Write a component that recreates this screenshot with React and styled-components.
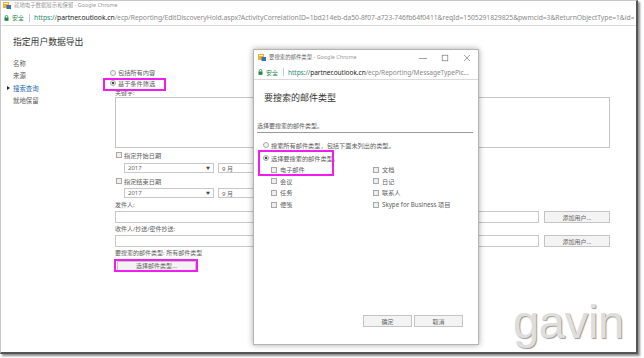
import React from 'react';
import styled, { createGlobalStyle } from 'styled-components';

const GlobalStyle = createGlobalStyle`
  html, body {
    margin: 0;
    padding: 0;
    background: #fff;
  }
  body {
    font-family: "Noto Sans", "Noto Sans CJK SC", sans-serif;
    color: #555;
  }
  * { box-sizing: border-box; }
`

const Screen = styled.div`
  width: 644px;
  height: 358px;
  overflow: hidden;
  background: #fff;
`
const Frame = styled.div`
  position: relative;
  width: 638px;
  height: 354px;
  background: #fff;
  border: 1px solid #c8c8c8;
  border-right: 2px solid #555;
  border-bottom: 2px solid #555;
  box-shadow: 2px 2px 2px rgba(0, 0, 0, 0.45);
  overflow: hidden;
`

/* ---- chrome window bits ---- */
const TitleBar = styled.div`
  display: flex;
  align-items: center;
  gap: 3px;
  height: ${p => p.$h || 9}px;
  padding-left: ${p => p.$pl || 2}px;
  font-size: 5.4px;
  line-height: 9px;
  color: #999;
  white-space: nowrap;
`
const TitleText = styled.span`
  color: ${p => p.$dark ? '#666' : '#999'};
`
const WinControls = styled.div`
  margin-left: auto;
  display: flex;
  align-items: center;
  gap: 14px;
  padding-right: 7px;
`
const AddressBar = styled.div`
  display: flex;
  align-items: center;
  height: ${p => p.$h || 16}px;
  padding-left: ${p => p.$pl || 3}px;
  border-bottom: 1px solid #dadada;
  white-space: nowrap;
  overflow: hidden;
`
const Secure = styled.span`
  font-size: 6px;
  color: #1b8a45;
  margin-left: 3px;
`
const Sep = styled.span`
  width: 1px;
  height: 8px;
  background: #ccc;
  margin: 0 4px 0 5px;
`
const Url = styled.span`
  font-size: ${p => p.$size || 6.55}px;
  color: #8a8a8a;
  letter-spacing: -0.05px;
  overflow: hidden;
`
const Scheme = styled.span`
  color: #1b8a72;
`
const Host = styled.span`
  color: #222;
`

/* ---- main page ---- */
const Page = styled.div`
  padding: 0 0 0 4px;
`
const PageTitle = styled.h1`
  margin: 10px 0 0 8px;
  font-size: 8.8px;
  line-height: 12px;
  font-weight: 400;
  color: #333;
`
const Body = styled.div`
  display: flex;
  margin-top: 8px;
`
const Nav = styled.ul`
  list-style: none;
  margin: 0;
  padding: 1px 0 0;
  width: 110px;
`
const NavItem = styled.li`
  display: flex;
  align-items: center;
  height: 12.5px;
  font-size: 6.4px;
  color: ${p => p.$active ? '#2767b5' : '#5a5a5a'};
`
const Marker = styled.span`
  width: 8px;
  display: flex;
  align-items: center;
  padding-left: 2px;
`
const Form = styled.div`
  display: flex;
  flex-direction: column;
  padding-top: 11px;
`
const Radio = styled.span`
  width: 6px;
  height: 6px;
  border-radius: 50%;
  border: 1px solid #a8a8a8;
  background: ${p => p.$on ? 'radial-gradient(circle, #444 0 1.4px, #f4f4f4 1.6px)' : '#f4f4f4'};
  flex: none;
`
const Check = styled.span`
  width: 6px;
  height: 6px;
  border: 1px solid #a8a8a8;
  background: #efefef;
  flex: none;
`
const OptionRow = styled.div`
  display: flex;
  align-items: center;
  gap: ${p => p.$gap ?? 2}px;
  height: ${p => p.$h || 11}px;
  margin-top: ${p => p.$mt || 0}px;
  margin-left: ${p => p.$ml || 0}px;
  font-size: 6.2px;
  line-height: 7px;
  color: #5e5e5e;
  white-space: nowrap;
`
const Marked = styled.div`
  position: relative;
  margin-top: ${p => p.$mt || 0}px;
  margin-left: ${p => p.$ml || 0}px;
`
const Highlight = styled.span`
  position: absolute;
  border: 2px solid #f31cf0;
  pointer-events: none;
`
const Label = styled.div`
  font-size: 6px;
  line-height: ${p => p.$h || 11}px;
  height: ${p => p.$h || 11}px;
  margin-top: ${p => p.$mt || 0}px;
  color: #5e5e5e;
  white-space: nowrap;
`
const TextArea = styled.div`
  width: 495px;
  height: 51px;
  border: 1px solid #c4c4c4;
`
const SelectRow = styled.div`
  display: flex;
  gap: 4px;
  margin-left: 9px;
  margin-top: ${p => p.$mt || 0}px;
`
const Select = styled.div`
  display: flex;
  align-items: center;
  justify-content: space-between;
  width: ${p => p.$w}px;
  height: 10px;
  padding: 0 3px;
  border: 1px solid #c8c8c8;
  font-size: 6px;
  color: #666;
`
const Arrow = styled.span`
  font-size: 4px;
  color: #444;
`
const InputRow = styled.div`
  display: flex;
  gap: 5px;
  margin-top: ${p => p.$mt || 0}px;
`
const Input = styled.div`
  width: 424px;
  height: 12px;
  border: 1px solid #c8c8c8;
`
const Button = styled.div`
  display: flex;
  align-items: center;
  justify-content: center;
  width: ${p => p.$w}px;
  height: ${p => p.$h || 12}px;
  border: 1px solid #c4c4c4;
  background: #f3f3f3;
  font-size: 6px;
  color: #666;
  white-space: nowrap;
`
const ChooseButton = styled(Button)`
  margin: 1.5px 0 0 2px;
`

/* ---- popup window ---- */
const Popup = styled.div`
  position: absolute;
  left: 252px;
  top: 48px;
  width: 226px;
  height: 296px;
  display: flex;
  flex-direction: column;
  background: #fff;
  border: 1px solid #b4b4b4;
  box-shadow: 0 0 6px rgba(0, 0, 0, 0.35);
`
const PopupBody = styled.div`
  flex: 1;
  display: flex;
  flex-direction: column;
  padding: 0 0 17px 3px;
`
const PopupTitle = styled.h2`
  margin: 12px 0 0 7px;
  font-size: 9px;
  line-height: 12px;
  font-weight: 400;
  color: #333;
`
const Section = styled.div`
  width: 216px;
  margin-top: 16px;
  font-size: 6px;
  line-height: 12px;
  color: #5e5e5e;
  border-bottom: 1px solid #9a9a9a;
`
const TypeGrid = styled.div`
  display: grid;
  grid-template-columns: 102px 100px;
  grid-auto-rows: 11.6px;
  margin: 1px 0 0 14px;
`
const Footer = styled.div`
  margin-top: auto;
  display: flex;
  justify-content: flex-end;
  gap: 2px;
  padding-right: 15px;
`

const Watermark = styled.div`
  position: absolute;
  left: 512px;
  top: 297px;
  font-family: "Liberation Sans", Arial, sans-serif;
  font-size: 47px;
  line-height: 47px;
  color: #dedede;
  text-shadow: 1px 1px 1px #9a9a9a;
  letter-spacing: -0.3px;
`

const PageIcon = () => (
  <svg width="8" height="7" viewBox="0 0 8 7">
    <rect x="0" y="0" width="6" height="6" fill="#e8b530" />
    <rect x="1" y="1" width="4" height="1" fill="#fff6d0" />
    <rect x="3.5" y="3" width="4.5" height="4" fill="#3a6fc0" />
  </svg>
);

const Lock = () => (
  <svg width="5" height="6" viewBox="0 0 5 6">
    <path d="M1.2 2.6V1.8a1.3 1.3 0 0 1 2.6 0v0.8" fill="none" stroke="#1b8a45" strokeWidth="0.8" />
    <rect x="0.5" y="2.5" width="4" height="3.3" fill="#1b8a45" />
  </svg>
);

const Bullet = () => (
  <svg width="3" height="4" viewBox="0 0 3 4">
    <path d="M0 0 L3 2 L0 4Z" fill="#222" />
  </svg>
);

const Controls = () => (
  <WinControls>
    <svg width="8" height="8" viewBox="0 0 8 8">
      <path d="M0 4.5H8" stroke="#777" strokeWidth="0.7" />
    </svg>
    <svg width="8" height="8" viewBox="0 0 8 8">
      <rect x="1.2" y="1.2" width="5.6" height="5.6" fill="none" stroke="#777" strokeWidth="0.7" />
    </svg>
    <svg width="8" height="8" viewBox="0 0 8 8">
      <path d="M1 1L7 7M7 1L1 7" stroke="#777" strokeWidth="0.7" />
    </svg>
  </WinControls>
);

const navItems = ['名称', '来源', '搜索查询', '就地保留'];
const mailTypes = ['电子邮件', '文档', '会议', '日记', '任务', '联系人', '便笺', 'Skype for Business 项目'];

const MAIN_URL = '/ecp/Reporting/EditDiscoveryHold.aspx?ActivityCorrelationID=1bd214eb-da50-8f07-a723-746fb64f0411&reqId=1505291829825&pwmcid=3&ReturnObjectType=1&id=';

const DateRow = ({ label, mt }) => (
  <>
    <OptionRow $h={10} $mt={mt} $ml={1} $gap={2}>
      <Check />{label}
    </OptionRow>
    <SelectRow $mt={mt === 2 ? 3 : 2}>
      <Select $w={90}>2017<Arrow>▼</Arrow></Select>
      <Select $w={60}>9 月</Select>
    </SelectRow>
  </>
);

export default function App() {
  return (
    <Screen>
      <GlobalStyle />
      <Frame>
        <TitleBar>
          <PageIcon />
          <TitleText>就地电子数据展示和保留 - Google Chrome</TitleText>
        </TitleBar>
        <AddressBar>
          <Lock />
          <Secure>安全</Secure>
          <Sep />
          <Url $size={6.8}><Scheme>https://</Scheme><Host>partner.outlook.cn</Host>{MAIN_URL}</Url>
        </AddressBar>

        <Page>
          <PageTitle>指定用户数据导出</PageTitle>
          <Body>
            <Nav>
              {navItems.map((item, i) => (
                <NavItem key={item} $active={i === 2}>
                  <Marker>{i === 2 && <Bullet />}</Marker>
                  {item}
                </NavItem>
              ))}
            </Nav>
            <Form>
              <OptionRow $ml={-5}>
                <Radio />包括所有内容
              </OptionRow>
              <Marked $mt={2} $ml={-5}>
                <Highlight style={{ left: -7, top: -2, width: 63, height: 13 }} />
                <OptionRow $h={6}>
                  <Radio $on />基于条件筛选
                </OptionRow>
              </Marked>
              <Label $h={7} $mt={4}>关键字:</Label>
              <TextArea />
              <DateRow label="指定开始日期" mt={2} />
              <DateRow label="指定结束日期" mt={3} />
              <Label $h={10} $mt={2}>发件人:</Label>
              <InputRow $mt={1}>
                <Input />
                <Button $w={66}>添加用户...</Button>
              </InputRow>
              <Label $h={12}>收件人/抄送/密件抄送:</Label>
              <InputRow>
                <Input />
                <Button $w={66}>添加用户...</Button>
              </InputRow>
              <Label $h={12}>要搜索的邮件类型: 所有邮件类型</Label>
              <Marked>
                <Highlight style={{ left: -1, top: 0, width: 84, height: 13 }} />
                <ChooseButton $w={79} $h={10}>选择邮件类型...</ChooseButton>
              </Marked>
            </Form>
          </Body>
        </Page>

        <Popup>
          <TitleBar $h={15} $pl={4}>
            <PageIcon />
            <TitleText $dark>要搜索的邮件类型 <TitleText>- Google Chrome</TitleText></TitleText>
            <Controls />
          </TitleBar>
          <AddressBar $h={15} $pl={4}>
            <Lock />
            <Secure>安全</Secure>
            <Sep />
            <Url><Scheme>https://</Scheme><Host>partner.outlook.cn</Host>/ecp/Reporting/MessageTypePic...</Url>
          </AddressBar>
          <PopupBody>
            <PopupTitle>要搜索的邮件类型</PopupTitle>
            <Section>选择要搜索的邮件类型。</Section>
            <OptionRow $h={10} $mt={7} $ml={6}>
              <Radio />搜索所有邮件类型，包括下面未列出的类型。
            </OptionRow>
            <Marked $mt={3}>
              <Highlight style={{ left: 1, top: -3, width: 76, height: 26 }} />
              <OptionRow $h={10} $ml={6}>
                <Radio $on />选择要搜索的邮件类型。
              </OptionRow>
              <TypeGrid>
                {mailTypes.map(t => (
                  <OptionRow key={t} $h={11.6} $gap={3}>
                    <Check />{t}
                  </OptionRow>
                ))}
              </TypeGrid>
            </Marked>
            <Footer>
              <Button $w={49}>确定</Button>
              <Button $w={49}>取消</Button>
            </Footer>
          </PopupBody>
        </Popup>

        <Watermark>gavin</Watermark>
      </Frame>
    </Screen>
  );
}
